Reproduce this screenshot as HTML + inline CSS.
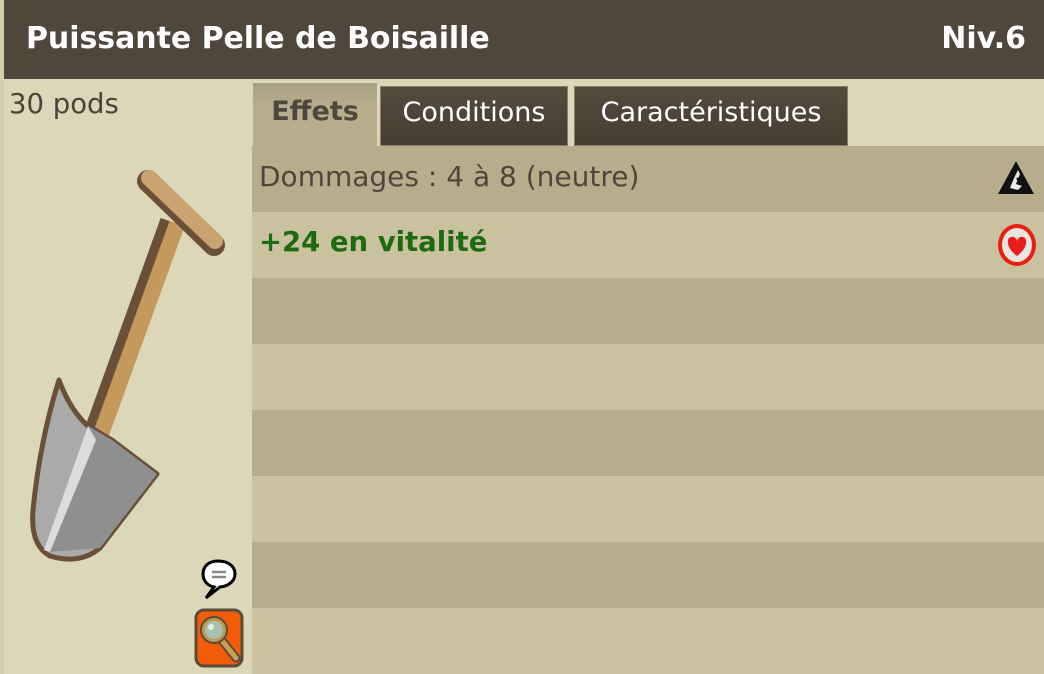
<!DOCTYPE html>
<html><head><meta charset="utf-8"><style>
*{margin:0;padding:0;box-sizing:border-box}
body{width:1044px;height:674px;overflow:hidden;background:#dcd7b8;font-family:"DejaVu Sans","Liberation Sans",sans-serif;position:relative}
.hdr{position:absolute;left:0;top:0;width:1044px;height:79px;background:#4f473b;border-left:4px solid #d4cfae}
.hdr .t{position:absolute;left:22px;top:21px;color:#fff;font-weight:bold;font-size:30px;letter-spacing:-0.05px}
.hdr .n{position:absolute;right:18px;top:21px;color:#fff;font-weight:bold;font-size:30px}
.pods{position:absolute;left:9px;top:88px;font-size:27.5px;color:#4a443a}
.tab{position:absolute;top:86px;height:60px;font-size:27px;text-align:center;line-height:52px}
.tab.d{background:linear-gradient(#544b3d,#463e32);color:#fff;border:1px solid #8a8068}
.tab.a{top:83px;height:63px;background:linear-gradient(#a9a184,#b8ae8e 40%);color:#4f473b;font-weight:bold;line-height:58px}
.row{position:absolute;left:252px;width:792px;height:66px}
.r1{background:#b7ad8d}.r2{background:#cac29f}
.rt{position:absolute;left:7px;top:14px;font-size:28px}
.lside{position:absolute;left:0;top:79px;width:4px;height:595px;background:#d4cfae}
</style></head><body>
<div class="hdr"><div class="t">Puissante Pelle de Boisaille</div><div class="n">Niv.6</div></div>
<div class="pods">30 pods</div>
<div class="row r1" style="top:146px"><div class="rt" style="color:#4f473b">Dommages : 4 à 8 (neutre)</div>
<svg style="position:absolute;right:8px;top:12px" width="40" height="40" viewBox="0 0 40 40"><polygon points="20,3 38,36 2,36" fill="#111"/><path d="M22 12 L24 16 L20 26 L26 28 L22 32 L14 30 L18 20 Z" fill="#e8e8e8"/><circle cx="22" cy="21" r="1.5" fill="#111"/></svg></div>
<div class="row r2" style="top:212px"><div class="rt" style="color:#1e6a10;font-weight:bold;font-size:27.5px">+24 en vitalité</div>
<svg style="position:absolute;right:6px;top:10px" width="42" height="46" viewBox="0 0 42 46"><ellipse cx="21" cy="23" rx="19" ry="21" fill="#e82010"/><ellipse cx="21" cy="23" rx="15" ry="17" fill="#e8e4e0"/><path d="M21 34 C10 26 10 16 15 15 C18 14 20 16 21 19 C22 16 24 14 27 15 C32 16 32 26 21 34Z" fill="#e81c1c"/></svg></div>
<div class="row r1" style="top:278px"></div>
<div class="row r2" style="top:344px"></div>
<div class="row r1" style="top:410px"></div>
<div class="row r2" style="top:476px"></div>
<div class="row r1" style="top:542px"></div>
<div class="row r2" style="top:608px"></div>
<div class="tab a" style="left:253px;width:124px">Effets</div>
<div class="tab d" style="left:380px;width:188px">Conditions</div>
<div class="tab d" style="left:574px;width:274px">Caractéristiques</div>
<div class="lside"></div>
<svg style="position:absolute;left:0;top:0" width="252" height="674" viewBox="0 0 252 674">
<line x1="172" y1="222" x2="96" y2="432" stroke="#6a5038" stroke-width="24"/>
<line x1="177" y1="224" x2="101" y2="434" stroke="#c49a5c" stroke-width="16"/>
<line x1="148" y1="181" x2="214" y2="245" stroke="#6a5038" stroke-width="22" stroke-linecap="round"/>
<line x1="149" y1="178" x2="215" y2="241" stroke="#c9a470" stroke-width="16" stroke-linecap="round"/>
<path d="M59 380 Q70 410 88 426 L112 440 L157 474 L100 548 Q80 565 50 556 Q30 545 33 510 Q40 440 59 380Z" fill="#aaa" stroke="#6a5038" stroke-width="5" stroke-linejoin="round"/>
<path d="M88 426 L112 440 L157 474 L100 548 L48 552 Z" fill="#8f8f8f"/>
<path d="M88 426 L96 440 L50 552 L44 550 Z" fill="#dcdcdc"/>
</svg>
<svg style="position:absolute;left:200px;top:558px" width="40" height="44" viewBox="0 0 40 44"><path d="M18 3 C8 3 3 9 3 16 C3 24 9 28 14 29 L6 40 L20 29 C30 28 35 22 35 16 C35 8 28 3 18 3Z" fill="#fff" stroke="#000" stroke-width="3"/><line x1="12" y1="14" x2="26" y2="14" stroke="#888" stroke-width="2.5"/><line x1="12" y1="19" x2="26" y2="19" stroke="#888" stroke-width="2.5"/></svg>
<svg style="position:absolute;left:194px;top:608px" width="50" height="60" viewBox="0 0 50 60"><rect x="2" y="2" width="46" height="56" rx="8" fill="#f25c08" stroke="#5a4a38" stroke-width="3"/><line x1="26" y1="30" x2="42" y2="50" stroke="#5a4a38" stroke-width="9" stroke-linecap="round"/><line x1="26" y1="30" x2="42" y2="50" stroke="#c9a050" stroke-width="5" stroke-linecap="round"/><circle cx="20" cy="22" r="13" fill="#b89a50" stroke="#5a4a38" stroke-width="2"/><circle cx="20" cy="22" r="9" fill="#a8c0b0"/><circle cx="17" cy="19" r="3" fill="#e0f0e8"/></svg>
</body></html>
